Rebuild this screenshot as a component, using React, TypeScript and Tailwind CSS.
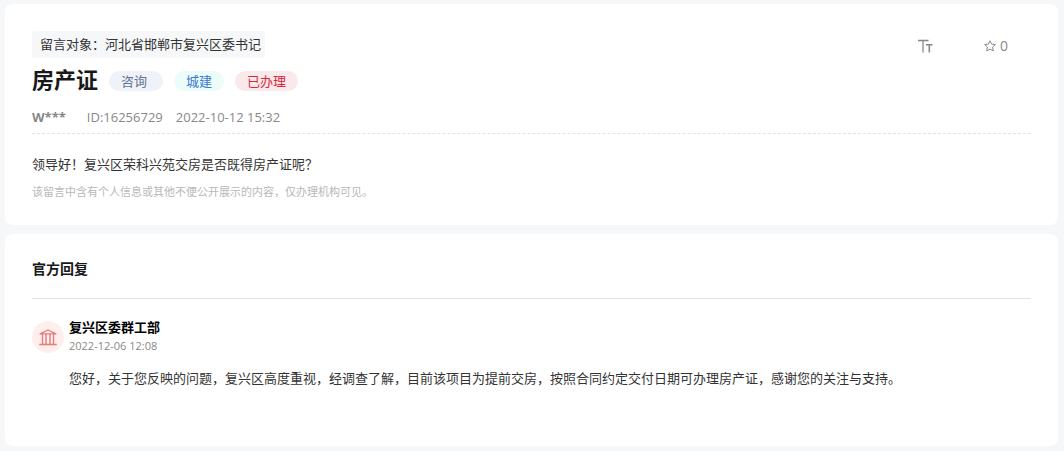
import type { ReactNode } from "react";

const message = {
  target: "河北省邯郸市复兴区委书记",
  title: "房产证",
  author: "W***",
  id: "16256729",
  time: "2022-10-12 15:32",
  content: "领导好！复兴区荣科兴苑交房是否既得房产证呢？",
  notice: "该留言中含有个人信息或其他不便公开展示的内容，仅办理机构可见。",
  stars: 0,
};

const reply = {
  department: "复兴区委群工部",
  time: "2022-12-06 12:08",
  content:
    "您好，关于您反映的问题，复兴区高度重视，经调查了解，目前该项目为提前交房，按照合同约定交付日期可办理房产证，感谢您的关注与支持。",
};

function Tag({ className, children }: { className: string; children: ReactNode }) {
  return (
    <span className={`flex h-5 items-center rounded-full text-[13px] ${className}`}>{children}</span>
  );
}

function TextSizeIcon() {
  return (
    <svg width="16" height="14" viewBox="0 0 16 14" fill="none" stroke="currentColor" aria-hidden="true">
      <path d="M0 1.5H10.5M5 1.5V13.5" strokeWidth="1.3" />
      <path d="M8 5.8H14.6M11.3 5.8V13.5" strokeWidth="1.6" />
    </svg>
  );
}

function StarIcon() {
  return (
    <svg width="12" height="12" viewBox="0 0 12 12" fill="none" stroke="currentColor" strokeLinejoin="round" aria-hidden="true">
      <path d="M6 0.8L7.6 4.1L11.3 4.6L8.6 7.1L9.3 10.9L6 9.1L2.7 10.9L3.4 7.1L0.7 4.6L4.4 4.1Z" />
    </svg>
  );
}

function InstitutionIcon() {
  return (
    <svg width="18" height="17" viewBox="0 0 18 17" fill="none" stroke="currentColor" aria-hidden="true">
      <path d="M1 4.8L9 1L17 4.8Z" strokeWidth="1.3" strokeLinejoin="round" />
      <path d="M3.5 5V15M7 5V15M11 5V15M14.5 5V15" strokeWidth="1.4" />
      <path d="M0.2 15.5H17.8" strokeWidth="1.6" />
    </svg>
  );
}

export default function App() {
  return (
    <main
      lang="zh-CN"
      className="flex min-h-screen flex-col gap-[9px] bg-[#f6f7f9] pt-1 pr-[6px] pb-[5px] pl-[5px] font-['Open_Sans','Noto_Sans_CJK_SC',sans-serif] text-[13px] leading-5 text-[#333]"
    >
      <article className="rounded-lg bg-white px-[27px] pt-[27px] pb-[23px]">
        <div className="flex items-start justify-between">
          <p className="rounded-xs bg-[#f6f7f9] pt-[3px] pr-1 pb-1 pl-2">留言对象：{message.target}</p>
          <div className="flex items-center gap-[50px] pt-[5px] pr-[23px] text-[#888]">
            <button type="button" aria-label="字体大小">
              <TextSizeIcon />
            </button>
            <button type="button" aria-label="收藏" className="flex items-center gap-1 text-sm leading-5">
              <StarIcon />
              {message.stars}
            </button>
          </div>
        </div>
        <div className="flex items-center pt-[5px]">
          <h1 className="mr-[11px] text-[22px] leading-8 font-bold text-[#191919]">{message.title}</h1>
          <div className="flex gap-[11px] pt-1">
            <Tag className="bg-[#eff3f9] pr-4 pl-3 text-[#617590]">咨询</Tag>
            <Tag className="bg-[#ecfcfb] px-3 text-[#3a78cb]">城建</Tag>
            <Tag className="bg-[#fae9ea] px-3 text-[#d8273f]">已办理</Tag>
          </div>
        </div>
        <div className="flex border-b border-dashed border-[#e3e3e3] pt-3 pb-[6px] text-[#888]">
          <span className="mr-[21px] font-bold">{message.author}</span>
          <span className="mr-[13px]">ID:{message.id}</span>
          <time dateTime="2022-10-12T15:32">{message.time}</time>
        </div>
        <p className="pt-5">{message.content}</p>
        <p className="pt-2 text-[11px] leading-5 text-[#b8b8b8]">{message.notice}</p>
      </article>

      <section className="flex-1 rounded-lg bg-white px-[27px] pt-[25px] pb-6">
        <h2 className="border-b border-[#e3e3e3] pb-[19px] text-sm leading-5 font-bold text-[#191919]">官方回复</h2>
        <div className="flex gap-[5px] pt-[18px]">
          <div className="mt-1 flex size-8 shrink-0 items-center justify-center rounded-full bg-[#feeeee] text-[#e37e7b]">
            <InstitutionIcon />
          </div>
          <div>
            <h3 className="font-bold text-black">{reply.department}</h3>
            <time dateTime="2022-12-06T12:08" className="block pt-px text-[11px] leading-4 text-[#888]">
              {reply.time}
            </time>
            <p className="pt-[14px]">{reply.content}</p>
          </div>
        </div>
      </section>
    </main>
  );
}
